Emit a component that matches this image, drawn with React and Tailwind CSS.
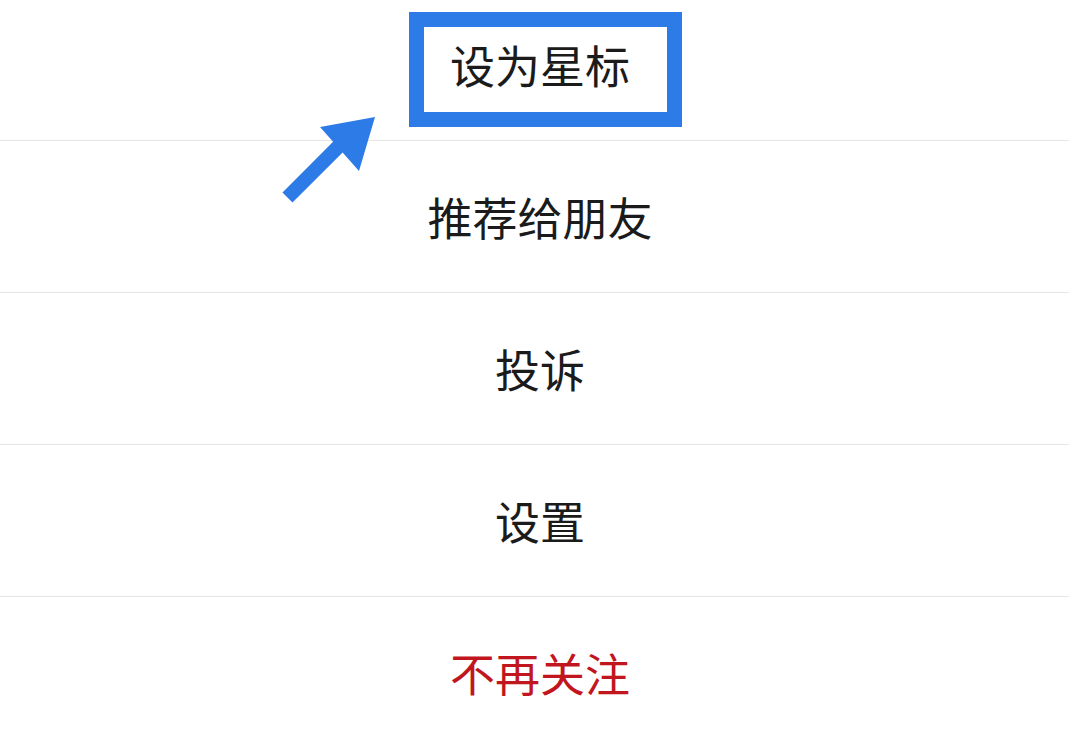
const items = [
  { label: '推荐给朋友' },
  { label: '投诉' },
  { label: '设置' },
  { label: '不再关注', danger: true },
];

function Row({ label, danger }) {
  return (
    <div className="flex h-[152px] shrink-0 items-center justify-center border-t border-[#e6e6e6] pl-[11px]">
      <span className={danger ? 'text-[45px] leading-none text-[#c2161e]' : 'text-[45px] leading-none text-[#1b1b1b]'}>
        {label}
      </span>
    </div>
  );
}

export default function App() {
  return (
    <div
      className="relative h-[731px] w-[1069px] overflow-hidden bg-white"
      style={{ fontFamily: '"Noto Sans CJK SC", "Noto Sans", sans-serif' }}
    >
      <div className="flex flex-col">
        <div className="flex h-[140px] shrink-0 items-center justify-center pb-[12px] pl-[11px]">
          <span className="text-[45px] leading-none text-[#1b1b1b]">设为星标</span>
        </div>
        {items.map((it) => (
          <Row key={it.label} {...it} />
        ))}
      </div>

      {/* annotation box */}
      <div className="pointer-events-none absolute left-[409px] top-[12px] h-[115px] w-[273px] border-[15px] border-[#2d7be6]" />

      {/* annotation arrow */}
      <svg className="pointer-events-none absolute left-0 top-0" width="1069" height="731" viewBox="0 0 1069 731">
        <polygon
          points="282.5,192.5 333.1,141.8 320,127 375,117 359,171 342.6,152.4 292.5,202.5"
          fill="#2d7be6"
        />
      </svg>
    </div>
  );
}
